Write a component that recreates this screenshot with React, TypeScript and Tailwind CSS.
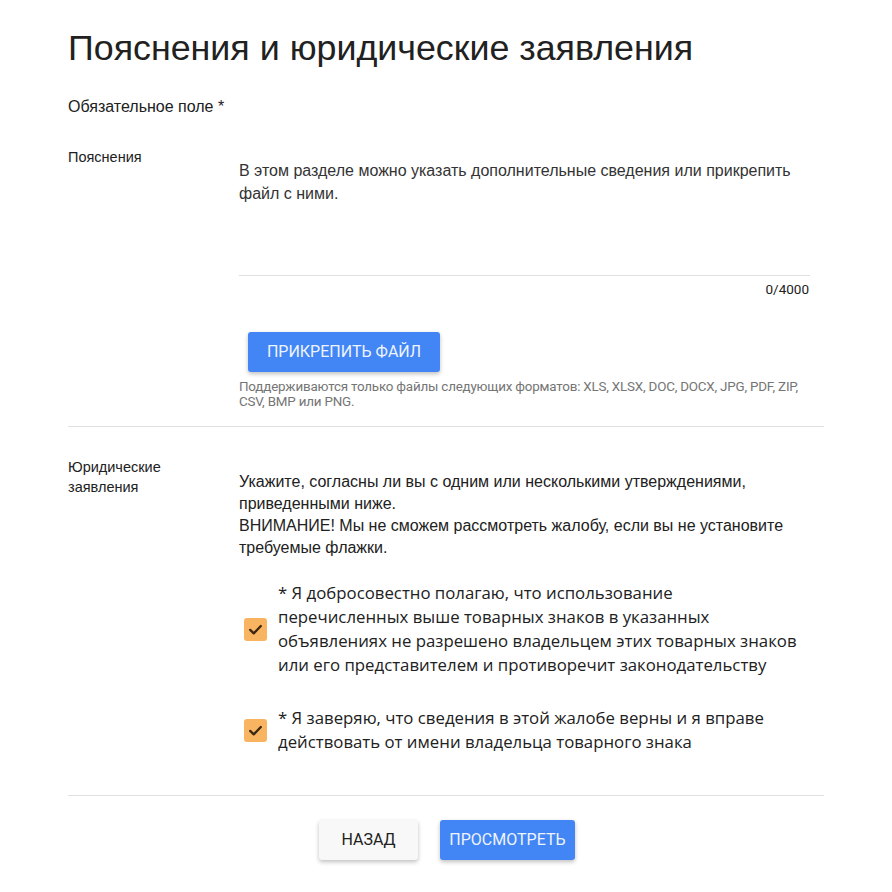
import React from "react";

function Check() {
  return (
    <span className="flex h-[23px] w-[23px] shrink-0 items-center justify-center rounded-[3px] bg-[#f8b460]">
      <svg width="17" height="17" viewBox="0 0 24 24" fill="none">
        <path d="M4.5 12.5l5 5L19.5 7" stroke="#3a2814" strokeWidth="3.2" strokeLinecap="round" strokeLinejoin="round" />
      </svg>
    </span>
  );
}

export default function App() {
  return (
    <div className="min-h-[892px] bg-white px-[68px] pt-[28px] font-['Liberation_Sans',Arial,sans-serif] text-[#212121]">
      <h1 className="text-[35.8px] leading-[40px] font-normal">Пояснения и юридические заявления</h1>
      <p className="mt-[29px] text-[16px] leading-[20px]">Обязательное поле *</p>

      <div className="mt-[30px] grid grid-cols-[171px_1fr]">
        <div className="text-[14.5px] leading-[20px]">Пояснения</div>
        <div className="w-[576px]">
          <div className="h-[129px] w-[571px] border-b border-[#e0e0e0] pt-[12px] text-[16px] leading-[23px] text-[#333333]">
            В этом разделе можно указать дополнительные сведения или прикрепить файл с ними.
          </div>
          <div className="mt-[5px] w-[570px] text-right font-['Roboto',sans-serif] text-[13.5px] leading-[16px] text-[#212121]">0/4000</div>
          <button className="ml-[9px] mt-[35px] flex h-[40px] w-[192px] items-center justify-center rounded-[3px] bg-[#4285f4] font-['Roboto',sans-serif] text-[16px] text-[#eef4ff] shadow-[0_2px_4px_rgba(0,0,0,0.25)]">
            ПРИКРЕПИТЬ ФАЙЛ
          </button>
          <p className="mt-[7px] font-['Roboto',sans-serif] text-[13.4px] leading-[15px] tracking-[-0.2px] text-[#757575]">
            Поддерживаются только файлы следующих форматов: XLS, XLSX, DOC, DOCX, JPG, PDF, ZIP, CSV, BMP или PNG.
          </p>
        </div>
      </div>

      <div className="mt-[17px] h-px bg-[#e0e0e0]" />

      <div className="mt-[30px] grid grid-cols-[171px_1fr]">
        <div className="text-[14.5px] leading-[20px]">
          Юридические
          <br />
          заявления
        </div>
        <div className="w-[575px] pt-[14px]">
          <p className="w-[560px] text-[16px] leading-[22px]">
            Укажите, согласны ли вы с одним или несколькими утверждениями, приведенными ниже.
            <br />
            ВНИМАНИЕ! Мы не сможем рассмотреть жалобу, если вы не установите требуемые флажки.
          </p>
          <div className="ml-[5px] mt-[22px] flex items-center gap-[11px]">
            <Check />
            <p className="w-[525px] font-['Open_Sans',sans-serif] text-[16.8px] leading-[24px] text-[#212121]">
              * Я добросовестно полагаю, что использование перечисленных выше товарных знаков в указанных объявлениях не разрешено владельцем этих товарных знаков или его представителем и противоречит законодательству
            </p>
          </div>
          <div className="ml-[5px] mt-[29px] flex items-center gap-[11px]">
            <Check />
            <p className="w-[525px] font-['Open_Sans',sans-serif] text-[16.8px] leading-[24px] text-[#212121]">
              * Я заверяю, что сведения в этой жалобе верны и я вправе действовать от имени владельца товарного знака
            </p>
          </div>
        </div>
      </div>

      <div className="mt-[41px] h-px bg-[#e0e0e0]" />

      <div className="mt-[24px] flex justify-center gap-[22px] pl-[2px]">
        <button className="flex h-[40px] w-[99px] items-center justify-center rounded-[3px] bg-[#f8f8f8] font-['Roboto',sans-serif] text-[16px] text-[#212121] shadow-[0_2px_4px_rgba(0,0,0,0.25)]">
          НАЗАД
        </button>
        <button className="flex h-[40px] w-[135px] items-center justify-center rounded-[3px] bg-[#4285f4] font-['Roboto',sans-serif] text-[16px] text-[#eef4ff] shadow-[0_2px_4px_rgba(0,0,0,0.25)]">
          ПРОСМОТРЕТЬ
        </button>
      </div>
    </div>
  );
}
